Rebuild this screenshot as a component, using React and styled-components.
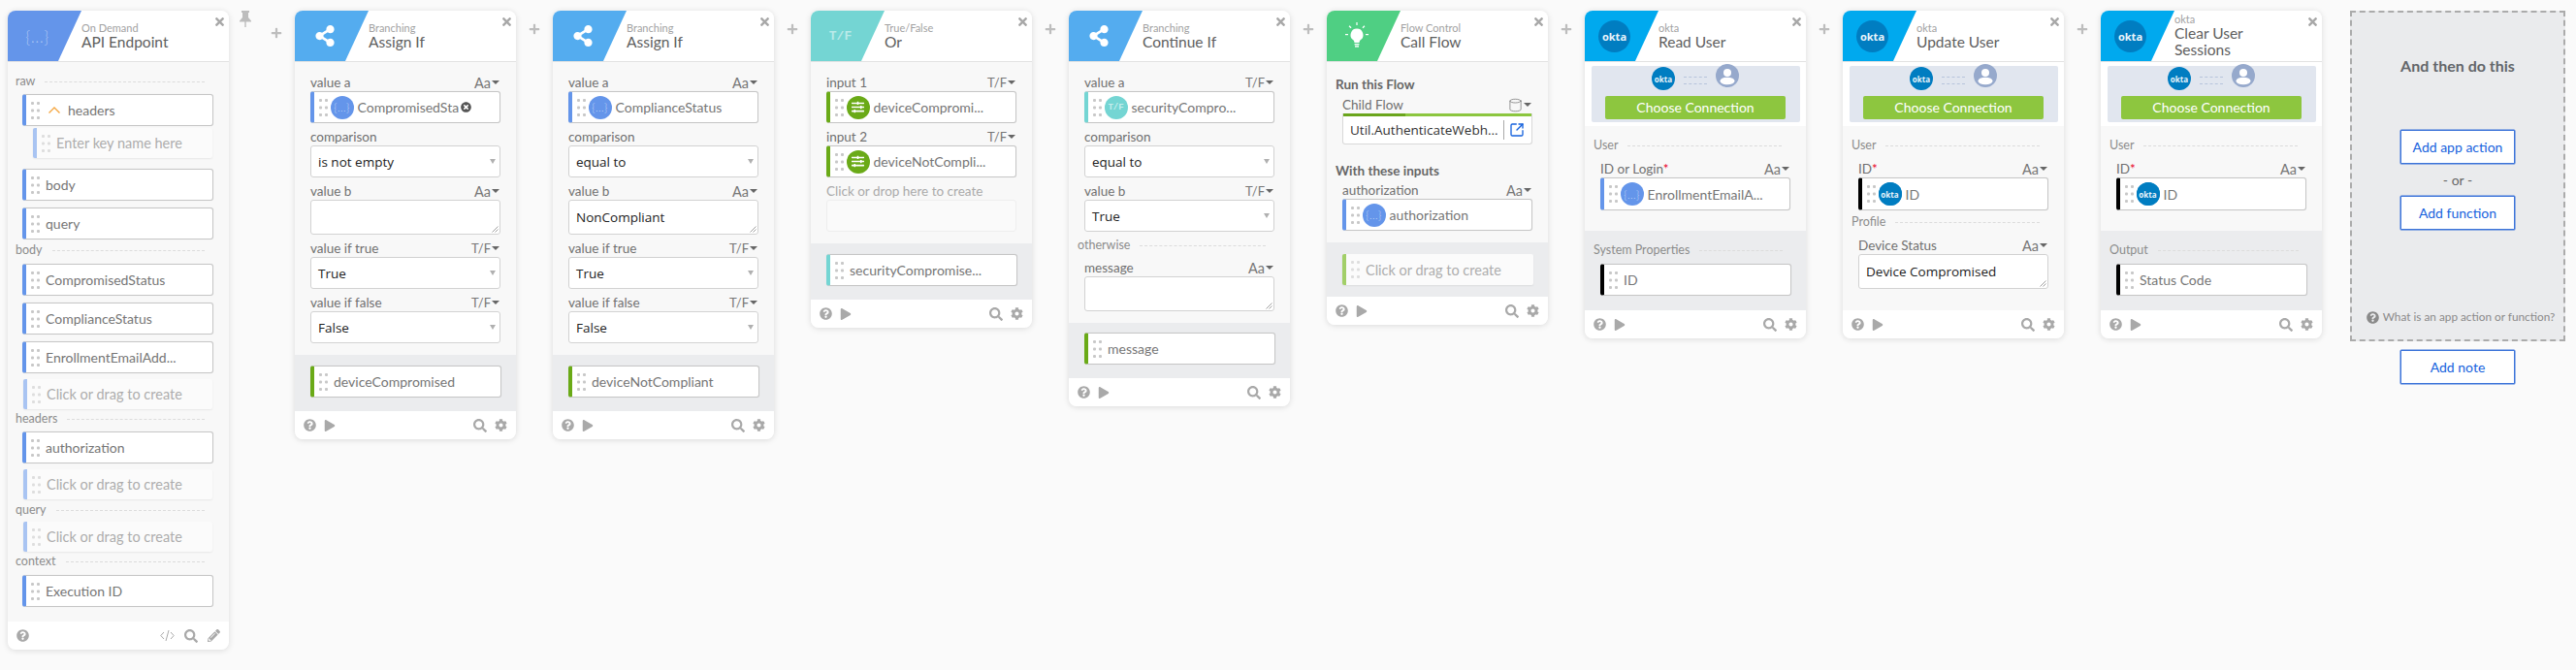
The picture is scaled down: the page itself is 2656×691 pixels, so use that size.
import React from 'react';
import styled, { createGlobalStyle } from 'styled-components';
import { FaTimes, FaPlus, FaQuestionCircle, FaPlay, FaSearch, FaCog, FaPencilAlt, FaShareAlt, FaTimesCircle, FaSlidersH } from 'react-icons/fa';
import { Cylinder, SquareArrowOutUpRight } from 'lucide-react';

const BLUE = '#6495ea';
const GREEN = '#6aaa17';
const TEAL = '#74d5d3';
const BLACK = '#000';

const GlobalStyle = createGlobalStyle`
  html, body { margin: 0; padding: 0; background: #fafafa; }
  body { font-family: Lato, "Open Sans", sans-serif; }
`;

const Page = styled.div`
  display: flex;
  align-items: flex-start;
  width: 2656px;
  height: 691px;
  padding: 11px 0 0 8px;
  box-sizing: border-box;
  overflow: hidden;
`;

const Card = styled.div`
  flex: none;
  width: 228px;
  display: flex;
  flex-direction: column;
  border-radius: 8px;
  overflow: hidden;
  background: #f8f8f8;
  box-shadow: 0 1px 6px rgba(0, 0, 0, 0.13);
`;

const Header = styled.div`
  position: relative;
  display: flex;
  height: 53px;
  flex: none;
  background: #fff;
  border-bottom: 1px solid #e2e2e2;
  box-sizing: border-box;
`;

const Wedge = styled.div`
  flex: none;
  width: 76px;
  height: 52px;
  padding-right: 15px;
  box-sizing: border-box;
  display: flex;
  align-items: center;
  justify-content: center;
  background: ${p => p.$color};
  clip-path: polygon(0 0, 100% 0, 68.4% 100%, 0 100%);
  color: #fff;
`;

const HeaderText = styled.div`
  display: flex;
  flex-direction: column;
  justify-content: center;
  min-width: 0;
`;

const Category = styled.div`
  font-size: 11px;
  line-height: 12px;
  color: #a2a2a2;
`;

const Title = styled.div`
  font-size: 15.5px;
  line-height: 17px;
  color: #5e5e5e;
  width: 110px;
`;

const Close = styled.div`
  position: absolute;
  top: 5px;
  right: 3px;
  color: #a8a8a8;
  display: flex;
`;

const ApiGlyph = styled.span`
  font-size: ${p => p.$size}px;
  font-weight: 300;
  letter-spacing: 0.5px;
  color: rgba(255, 255, 255, ${p => p.$alpha});
`;

const TfGlyph = styled.span`
  font-family: "Liberation Mono", monospace;
  font-weight: 700;
  font-size: ${p => p.$size}px;
  color: rgba(255, 255, 255, ${p => p.$alpha});
`;

const OktaLogo = styled.div`
  flex: none;
  width: ${p => p.$size}px;
  height: ${p => p.$size}px;
  border-radius: 50%;
  background: #007dc1;
  color: #e8f4fb;
  font-family: "Open Sans", sans-serif;
  font-weight: 700;
  font-size: ${p => p.$size * 0.335}px;
  display: flex;
  align-items: center;
  justify-content: center;
`;

const Body = styled.div`
  padding: ${p => p.$top ?? 12}px 16px ${p => p.$bottom ?? 12}px ${p => p.$left ?? 16}px;
`;

const Output = styled.div`
  background: #ebecee;
  padding: ${p => p.$top ?? 11}px 15px ${p => p.$bottom ?? 14}px 16px;
`;

const Section = styled.div`
  display: flex;
  align-items: center;
  gap: 10px;
  height: 14px;
  margin: ${p => p.$mt ?? 0}px 9px 0 -7px;
  font-size: 12.5px;
  color: #8c8c8c;
  &::after {
    content: '';
    flex: 1;
    border-top: 1px dashed #dcdcdc;
    margin-top: 3px;
  }
`;

const Heading = styled.div`
  height: 16px;
  line-height: 16px;
  margin: ${p => p.$mt ?? 0}px 0 0 -7px;
  font-size: 13.5px;
  font-weight: 700;
  color: #666;
`;

const Field = styled.div`
  margin-top: ${p => p.$mt ?? 5}px;
`;

const LabelRow = styled.div`
  display: flex;
  align-items: center;
  justify-content: space-between;
  height: 18px;
  font-size: 13.5px;
  color: ${p => (p.$faint ? '#aaa' : '#707070')};
`;

const Required = styled.span`
  color: #e8002a;
`;

const TypeTag = styled.span`
  display: flex;
  align-items: center;
  gap: 1px;
  margin-right: 1px;
  font-size: ${p => (p.$small ? 13 : 14.5)}px;
  color: #777;
  &::after {
    content: '';
    border-left: 4px solid transparent;
    border-right: 4px solid transparent;
    border-top: 4px solid #666;
  }
`;

const Pill = styled.div`
  position: relative;
  display: flex;
  align-items: center;
  height: ${p => p.$h ?? 33}px;
  margin-top: ${p => p.$mt ?? 0}px;
  padding-left: 5px;
  box-sizing: border-box;
  background: #fff;
  border: 1px solid #c6c6c6;
  border-left: 4px solid ${p => p.$color};
  border-radius: 3px;
  box-shadow: 0 0 1px rgba(0, 0, 0, 0.1);
  font-size: 14px;
  color: #767676;
  white-space: nowrap;
`;

const Placeholder = styled.div`
  display: flex;
  align-items: center;
  height: ${p => p.$h ?? 31}px;
  margin: ${p => p.$mt ?? 0}px ${p => p.$right ?? 1}px 0 ${p => p.$indent ?? 1}px;
  padding-left: ${p => p.$pad ?? 5}px;
  box-sizing: border-box;
  background: #fbfbfb;
  border-left: 4px solid ${p => p.$color};
  border-radius: 2px;
  box-shadow: 0 1px 2px rgba(0, 0, 0, 0.07);
  font-size: 14.5px;
  color: #adadad;
`;

const GripSvg = styled.svg`
  flex: none;
  margin-right: 6px;
  fill: ${p => (p.$light ? '#dedede' : '#c8c8c8')};
`;

const Badge = styled.div`
  flex: none;
  width: 24px;
  height: 24px;
  margin: 0 4px 0 -3.5px;
  border-radius: 50%;
  background: ${p => p.$color};
  color: #fff;
  display: flex;
  align-items: center;
  justify-content: center;
`;

const Chevron = styled.svg`
  flex: none;
  margin: 0 8px 0 3px;
`;

const RemoveIcon = styled.span`
  position: absolute;
  left: 151px;
  top: 10px;
  display: flex;
  color: #555;
`;

const Control = styled.div`
  position: relative;
  display: flex;
  align-items: center;
  justify-content: space-between;
  height: ${p => p.$h ?? 33}px;
  padding: 0 4px 0 7px;
  box-sizing: border-box;
  background: #fff;
  border: 1px solid #d2d2d2;
  border-radius: 3px;
  font-family: "Open Sans", sans-serif;
  font-size: 13.5px;
  color: #222;
`;

const SelectArrow = styled.span`
  border-left: 3px solid transparent;
  border-right: 3px solid transparent;
  border-top: 5px solid #b0b0b0;
`;

const Resizer = styled.svg`
  position: absolute;
  right: 1px;
  bottom: 1px;
`;

const EmptyBox = styled.div`
  height: 33px;
  box-sizing: border-box;
  background: #fafafa;
  border: 1px solid #eee;
  border-radius: 3px;
`;

const FlowBox = styled.div`
  display: flex;
  align-items: center;
  height: 32px;
  padding: 3px 0 0 7px;
  box-sizing: border-box;
  background: linear-gradient(to right, #6aa51c 33%, #8cc63f 33%) top / 100% 3px no-repeat #fff;
  border: 1px solid #d8d8d8;
  border-top: 0;
  border-radius: 0 0 3px 3px;
  font-family: "Open Sans", sans-serif;
  font-size: 13.5px;
  color: #333;
  white-space: nowrap;
`;

const FlowLink = styled.span`
  display: flex;
  align-items: center;
  height: 20px;
  margin-left: 5px;
  padding-left: 5px;
  border-left: 1px solid #aaa;
  color: #1662dd;
`;

const ConnectWrap = styled.div`
  background: #fff;
  padding: 4px 6px 4px 7px;
`;

const ConnectPanel = styled.div`
  height: 58px;
  padding: 0 15px 3px 14px;
  box-sizing: border-box;
  background: #e1e6ef;
  border-radius: 2px;
`;

const ConnectIcons = styled.div`
  display: flex;
  justify-content: center;
  gap: 9px;
  height: 31px;
  padding-top: 1px;
  box-sizing: border-box;
`;

const DashPair = styled.div`
  width: 24px;
  height: 6px;
  margin-top: 10px;
  border-top: 1px dashed #b7c4dc;
  border-bottom: 1px dashed #b7c4dc;
`;

const UserSvg = styled.svg`
  flex: none;
  margin-top: -3px;
`;

const ConnectButton = styled.div`
  height: 24px;
  line-height: 23px;
  text-align: center;
  background: #8dc63f;
  border-radius: 2px;
  color: #fff;
  font-size: 14px;
`;

const Footer = styled.div`
  display: flex;
  align-items: center;
  gap: ${p => p.$gap ?? 8}px;
  height: 29px;
  flex: none;
  padding: 0 9px;
  background: #fff;
  color: #a9a9a9;
`;

const Spacer = styled.div`
  flex: 1;
`;

const Connector = styled.div`
  flex: none;
  width: 38px;
  padding-top: 13px;
  display: flex;
  justify-content: center;
  color: #bdbdbd;
`;

const PinGap = styled.div`
  flex: none;
  width: 68px;
  display: flex;
  gap: 20px;
  padding: 0 0 0 11px;
  box-sizing: border-box;
  color: #bdbdbd;
`;

const PlusSlot = styled.div`
  padding-top: 13px;
`;

const AddColumn = styled.div`
  flex: none;
  width: 222px;
  margin-left: 29px;
  display: flex;
  flex-direction: column;
  align-items: center;
`;

const AddPanel = styled.div`
  width: 100%;
  height: 341px;
  padding: 44px 0 15px;
  box-sizing: border-box;
  display: flex;
  flex-direction: column;
  align-items: center;
  background: #eaebed;
  border: 2px dashed #ababab;
`;

const AddTitle = styled.div`
  line-height: 22px;
  font-size: 16px;
  font-weight: 700;
  color: #63666a;
`;

const AddButton = styled.div`
  width: 118px;
  height: 35px;
  margin-top: ${p => p.$mt}px;
  box-sizing: border-box;
  display: flex;
  align-items: center;
  justify-content: center;
  background: #fff;
  border: 1px solid #3b73d9;
  border-radius: 1px;
  box-shadow: 0 0 0 0.5px #3b73d9;
  font-size: 14px;
  color: #1662dd;
`;

const OrText = styled.div`
  margin-top: 7px;
  line-height: 20px;
  font-size: 14px;
  color: #666;
`;

const HelpLine = styled.div`
  margin-top: auto;
  display: flex;
  align-items: center;
  gap: 4px;
  padding-left: 6px;
  line-height: 16px;
  font-size: 11.8px;
  color: #8a8a8a;
  white-space: nowrap;
`;

const CodeSvg = styled.svg`
  flex: none;
  fill: none;
  stroke: #a9a9a9;
  stroke-width: 1;
`;

const Grip = ({ light }) => (
  <GripSvg $light={light} width="9" height="18" viewBox="0 0 9 18">
    {[1.5, 9, 16.5].map(y => (
      <React.Fragment key={y}>
        <rect x="0" y={y - 1.5} width="3" height="3" rx="1" />
        <rect x="6" y={y - 1.5} width="3" height="3" rx="1" />
      </React.Fragment>
    ))}
  </GripSvg>
);

const ApiBadge = () => (
  <Badge $color={BLUE}>
    <ApiGlyph $size={11} $alpha={0.6}>{'{...}'}</ApiGlyph>
  </Badge>
);

const TfBadge = () => (
  <Badge $color={TEAL}>
    <TfGlyph $size={9} $alpha={0.6}>T/F</TfGlyph>
  </Badge>
);

const VarBadge = () => (
  <Badge $color={GREEN}>
    <FaSlidersH size={13} />
  </Badge>
);

const OktaBadge = () => (
  <Badge $color="#007dc1">
    <OktaLogo $size={24}>okta</OktaLogo>
  </Badge>
);

const Token = ({ color = BLUE, badge, children, ...rest }) => (
  <Pill $color={color} {...rest}>
    <Grip />
    {badge}
    {children}
  </Pill>
);

const Empty = ({ children = 'Click or drag to create', color = '#a9c4f2', ...rest }) => (
  <Placeholder $color={color} {...rest}>
    <Grip light />
    {children}
  </Placeholder>
);

const Select = ({ value }) => (
  <Control>
    {value}
    <SelectArrow />
  </Control>
);

const TextArea = ({ value }) => (
  <Control $h={36}>
    {value}
    <Resizer width="7" height="7" viewBox="0 0 7 7" stroke="#888" strokeWidth="0.8">
      <path d="M0.5 6.5L6.5 0.5M3.5 6.5L6.5 3.5" />
    </Resizer>
  </Control>
);

const Labeled = ({ label, type, small, mt, faint, children }) => (
  <Field $mt={mt}>
    <LabelRow $faint={faint}>
      <span>{label}</span>
      {type && <TypeTag $small={small}>{type}</TypeTag>}
    </LabelRow>
    {children}
  </Field>
);

const CardHead = ({ color, icon, category, title }) => (
  <Header>
    <Wedge $color={color}>{icon}</Wedge>
    <HeaderText>
      <Category>{category}</Category>
      <Title>{title}</Title>
    </HeaderText>
    <Close><FaTimes size={13} /></Close>
  </Header>
);

const CardFoot = () => (
  <Footer>
    <FaQuestionCircle size={13} />
    <FaPlay size={12} />
    <Spacer />
    <FaSearch size={14} />
    <FaCog size={13} />
  </Footer>
);

const Plus = () => (
  <Connector><FaPlus size={12} /></Connector>
);

const Share = () => <FaShareAlt size={22} />;

const Bulb = () => (
  <svg width="26" height="30" viewBox="0 0 26 30" fill="#fff">
    <path d="M13 7.5a6.5 6.5 0 0 0-4 11.6c.9.8 1.3 1.6 1.5 2.9h5c.2-1.3.6-2.1 1.5-2.9A6.5 6.5 0 0 0 13 7.5z" />
    <rect x="10.6" y="23" width="4.8" height="1.4" />
    <rect x="11" y="25.2" width="4" height="1.4" />
    <rect x="12.4" y="1" width="1.2" height="3" />
    <rect x="1" y="13" width="3" height="1.2" />
    <rect x="22" y="13" width="3" height="1.2" />
    <path d="M4.6 5.2l.9-.9 2 2-.9.9zM21.4 5.2l-.9-.9-2 2 .9.9z" />
  </svg>
);

const Connection = () => (
  <ConnectWrap>
    <ConnectPanel>
      <ConnectIcons>
        <OktaLogo $size={24}>okta</OktaLogo>
        <DashPair />
        <UserSvg width="24" height="24" viewBox="0 0 24 24">
          <circle cx="12" cy="12" r="12" fill="#96a9cc" />
          <circle cx="12" cy="9" r="4" fill="#fff" />
          <ellipse cx="12" cy="17.5" rx="7.5" ry="3.8" fill="#fff" />
        </UserSvg>
      </ConnectIcons>
      <ConnectButton>Choose Connection</ConnectButton>
    </ConnectPanel>
  </ConnectWrap>
);

const AssignIf = ({ badge, compare, valueB, output }) => (
  <Card>
    <CardHead color="#54acef" icon={<Share />} category="Branching" title="Assign If" />
    <Body>
      <Labeled mt={0} label="value a" type="Aa">{badge}</Labeled>
      <Labeled label="comparison"><Select value={compare} /></Labeled>
      <Labeled label="value b" type="Aa"><TextArea value={valueB} /></Labeled>
      <Labeled label="value if true" type="T/F" small><Select value="True" /></Labeled>
      <Labeled label="value if false" type="T/F" small><Select value="False" /></Labeled>
    </Body>
    <Output>
      <Token color={GREEN}>{output}</Token>
    </Output>
    <CardFoot />
  </Card>
);

export default function App() {
  return (
    <Page>
      <GlobalStyle />

      <Card>
        <CardHead
          color={BLUE}
          icon={<ApiGlyph $size={17} $alpha={0.45}>{'{...}'}</ApiGlyph>}
          category="On Demand"
          title="API Endpoint"
        />
        <Body $bottom={15} $left={15}>
          <Section>raw</Section>
          <Pill $color={BLUE} $mt={7}>
            <Grip />
            <Chevron width="12" height="7" viewBox="0 0 12 7" fill="none" stroke="#f5a742" strokeWidth="1.4">
              <path d="M0.5 6.5L6 1l5.5 5.5" />
            </Chevron>
            headers
          </Pill>
          <Empty $mt={2} $indent={11} $pad={5}>Enter key name here</Empty>
          <Token $mt={11}>body</Token>
          <Token $mt={7}>query</Token>
          <Section $mt={3}>body</Section>
          <Token $mt={8}>CompromisedStatus</Token>
          <Token $mt={7}>ComplianceStatus</Token>
          <Token $mt={7}>EnrollmentEmailAdd...</Token>
          <Empty $mt={6} />
          <Section $mt={2}>headers</Section>
          <Token $mt={7}>authorization</Token>
          <Empty $mt={6} />
          <Section $mt={3}>query</Section>
          <Empty $mt={6} />
          <Section $mt={2}>context</Section>
          <Token $mt={8}>Execution ID</Token>
        </Body>
        <Footer $gap={10}>
          <FaQuestionCircle size={13} />
          <Spacer />
          <CodeSvg width="15" height="13" viewBox="0 0 15 13">
            <path d="M4 3L0.8 6.5 4 10M11 3l3.2 3.5L11 10M9 1L6 12" />
          </CodeSvg>
          <FaSearch size={14} />
          <FaPencilAlt size={13} />
        </Footer>
      </Card>

      <PinGap>
        <svg width="12" height="17" viewBox="0 0 12 17" fill="currentColor">
          <path d="M2 0h8v2H9v5l3 3.5v1H0v-1L3 7V2H2z" />
          <rect x="5.3" y="11" width="1.4" height="6" />
        </svg>
        <PlusSlot><FaPlus size={12} /></PlusSlot>
      </PinGap>

      <AssignIf
        badge={
          <Token badge={<ApiBadge />}>
            CompromisedSta
            <RemoveIcon><FaTimesCircle size={11} /></RemoveIcon>
          </Token>
        }
        compare="is not empty"
        valueB=""
        output="deviceCompromised"
      />
      <Plus />

      <AssignIf
        badge={<Token badge={<ApiBadge />}>ComplianceStatus</Token>}
        compare="equal to"
        valueB="NonCompliant"
        output="deviceNotCompliant"
      />
      <Plus />

      <Card>
        <CardHead
          color={TEAL}
          icon={<TfGlyph $size={13} $alpha={0.5}>T/F</TfGlyph>}
          category="True/False"
          title="Or"
        />
        <Body>
          <Labeled mt={0} label="input 1" type="T/F" small>
            <Token color={GREEN} badge={<VarBadge />}>deviceCompromi...</Token>
          </Labeled>
          <Labeled label="input 2" type="T/F" small>
            <Token color={GREEN} badge={<VarBadge />}>deviceNotCompli...</Token>
          </Labeled>
          <Labeled label="Click or drop here to create" faint>
            <EmptyBox />
          </Labeled>
        </Body>
        <Output>
          <Token color={TEAL}>securityCompromise...</Token>
        </Output>
        <CardFoot />
      </Card>
      <Plus />

      <Card>
        <CardHead color="#54acef" icon={<Share />} category="Branching" title="Continue If" />
        <Body $bottom={12}>
          <Labeled mt={0} label="value a" type="T/F" small>
            <Token color={TEAL} badge={<TfBadge />}>securityCompro...</Token>
          </Labeled>
          <Labeled label="comparison"><Select value="equal to" /></Labeled>
          <Labeled label="value b" type="T/F" small><Select value="True" /></Labeled>
          <Section $mt={6}>otherwise</Section>
          <Labeled mt={8} label="message" type="Aa"><TextArea value="" /></Labeled>
        </Body>
        <Output $top={10}>
          <Token color={GREEN}>message</Token>
        </Output>
        <CardFoot />
      </Card>
      <Plus />

      <Card>
        <CardHead color="#4fcf83" icon={<Bulb />} category="Flow Control" title="Call Flow" />
        <Body $top={15}>
          <Heading>Run this Flow</Heading>
          <Field $mt={4}>
            <LabelRow>
              <span>Child Flow</span>
              <TypeTag><Cylinder size={15} strokeWidth={1.2} /></TypeTag>
            </LabelRow>
            <FlowBox>
              Util.AuthenticateWebh...
              <FlowLink><SquareArrowOutUpRight size={16} strokeWidth={2} /></FlowLink>
            </FlowBox>
          </Field>
          <Heading $mt={19}>With these inputs</Heading>
          <Labeled mt={3} label="authorization" type="Aa">
            <Token badge={<ApiBadge />}>authorization</Token>
          </Labeled>
        </Body>
        <Output $top={12} $bottom={12}>
          <Empty color="#a2cf68" $h={32} $indent={0} $right={0} $pad={5} />
        </Output>
        <CardFoot />
      </Card>
      <Plus />

      <Card>
        <CardHead color="#00a9ee" icon={<OktaLogo $size={33}>okta</OktaLogo>} category="okta" title="Read User" />
        <Connection />
        <Body $bottom={21}>
          <Section>User</Section>
          <Labeled mt={9} label={<>ID or Login<Required>*</Required></>} type="Aa">
            <Token $h={34} badge={<ApiBadge />}>EnrollmentEmailA...</Token>
          </Labeled>
        </Body>
        <Output $top={12} $bottom={15}>
          <Section>System Properties</Section>
          <Token color={BLACK} $mt={8}>ID</Token>
        </Output>
        <CardFoot />
      </Card>
      <Plus />

      <Card>
        <CardHead color="#00a9ee" icon={<OktaLogo $size={33}>okta</OktaLogo>} category="okta" title="Update User" />
        <Connection />
        <Body $bottom={22}>
          <Section>User</Section>
          <Labeled mt={9} label={<>ID<Required>*</Required></>} type="Aa">
            <Token color={BLACK} $h={34} badge={<OktaBadge />}>ID</Token>
          </Labeled>
          <Section $mt={4}>Profile</Section>
          <Labeled mt={9} label="Device Status" type="Aa">
            <TextArea value="Device Compromised" />
          </Labeled>
        </Body>
        <CardFoot />
      </Card>
      <Plus />

      <Card>
        <CardHead
          color="#00a9ee"
          icon={<OktaLogo $size={33}>okta</OktaLogo>}
          category="okta"
          title="Clear User Sessions"
        />
        <Connection />
        <Body $bottom={21}>
          <Section>User</Section>
          <Labeled mt={9} label={<>ID<Required>*</Required></>} type="Aa">
            <Token color={BLACK} $h={34} badge={<OktaBadge />}>ID</Token>
          </Labeled>
        </Body>
        <Output $top={12} $bottom={15}>
          <Section>Output</Section>
          <Token color={BLACK} $mt={8}>Status Code</Token>
        </Output>
        <CardFoot />
      </Card>

      <AddColumn>
        <AddPanel>
          <AddTitle>And then do this</AddTitle>
          <AddButton $mt={55}>Add app action</AddButton>
          <OrText>- or -</OrText>
          <AddButton $mt={6}>Add function</AddButton>
          <HelpLine>
            <FaQuestionCircle size={13} />
            What is an app action or function?
          </HelpLine>
        </AddPanel>
        <AddButton $mt={9}>Add note</AddButton>
      </AddColumn>
    </Page>
  );
}
